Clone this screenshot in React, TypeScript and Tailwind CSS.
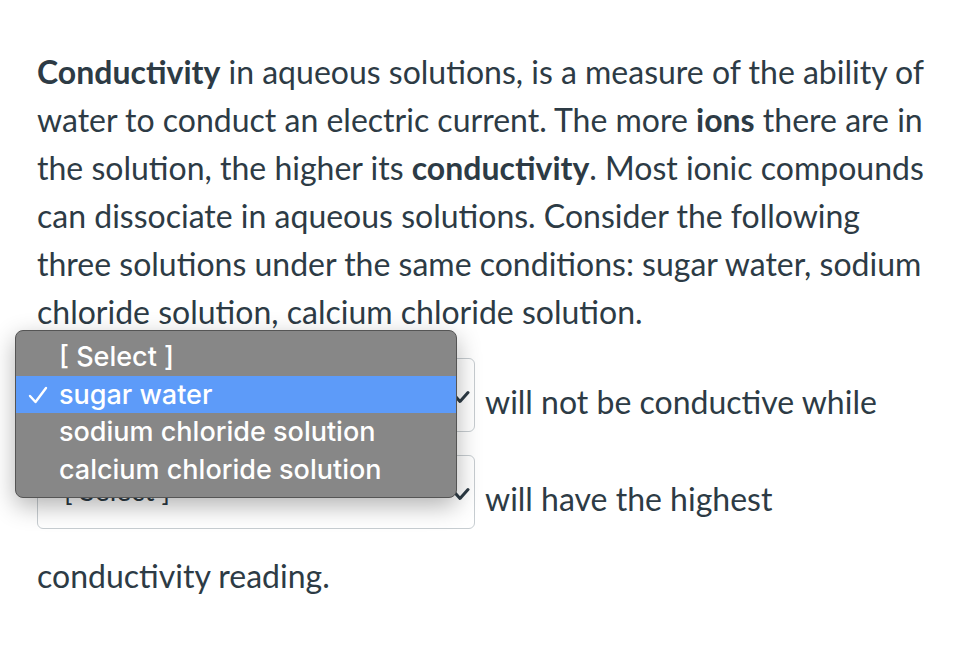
const menuItems = ['[ Select ]', 'sugar water', 'sodium chloride solution', 'calcium chloride solution'];

function SelectBox({ label }: { label: string }) {
  return (
    <div className="relative w-[438px] h-[74px] shrink-0 border border-[#c7cdd1] rounded-[6px] bg-white pl-[26px] pt-[10px] text-[28px] leading-[48px] text-[#2d3b45]">
      <span>{label}</span>
      <svg className="absolute left-[412px] top-[31px] w-[20px] h-[14px]" viewBox="0 0 20 14" fill="none">
        <path d="M2 2.5 L10 11.5 L18 2.5" stroke="#2d3b45" strokeWidth="3" strokeLinecap="round" strokeLinejoin="round" />
      </svg>
    </div>
  );
}

export default function App() {
  return (
    <div className="relative min-h-[650px] bg-white font-['Lato',sans-serif] text-[32px] leading-[48px] text-[#2d3b45] pl-[37px] pr-[30px] pt-[48px]">
      <p className="w-[892px]">
        <b className="font-bold">Conductivity</b> in aqueous solutions, is a measure of the ability of water to conduct an
        electric current. The more <b className="font-bold">ions</b> there are in the solution, the higher its{' '}
        <b className="font-bold">conductivity</b>. Most ionic compounds can dissociate in aqueous solutions. Consider the
        following three solutions under the same conditions: sugar water, sodium chloride solution, calcium chloride
        solution.
      </p>

      <div className="mt-[22px] flex flex-col gap-[23px]">
        <div className="flex items-start gap-[10px]">
          <SelectBox label="[ Select ]" />
          <span className="mt-[20px]">will not be conductive while</span>
        </div>
        <div className="flex items-start gap-[10px]">
          <SelectBox label="[ Select ]" />
          <span className="mt-[20px]">will have the highest</span>
        </div>
      </div>

      <p className="mt-[23px]">conductivity reading.</p>

      {/* open dropdown menu */}
      <div className="absolute left-[15px] top-[330px] w-[442px] h-[168px] rounded-[8px] border border-[#555] bg-[#878787] pt-[7px] shadow-[0_8px_24px_rgba(0,0,0,0.3)] font-['Inter',sans-serif] text-[27px] font-medium leading-[38px] text-white">
        {menuItems.map((item, i) => (
          <div
            key={item}
            className={`relative pl-[43px] ${i === 1 ? 'bg-[#5d9bf9] h-[37px] leading-[37px]' : 'h-[38px]'}`}
          >
            {i === 1 && (
              <svg className="absolute left-[12px] top-[10px] w-[20px] h-[18px]" viewBox="0 0 20 18" fill="none">
                <path d="M2 10 L7.5 16 L18 2" stroke="white" strokeWidth="2.4" strokeLinecap="round" strokeLinejoin="round" />
              </svg>
            )}
            <span>{item}</span>
          </div>
        ))}
      </div>
    </div>
  );
}
